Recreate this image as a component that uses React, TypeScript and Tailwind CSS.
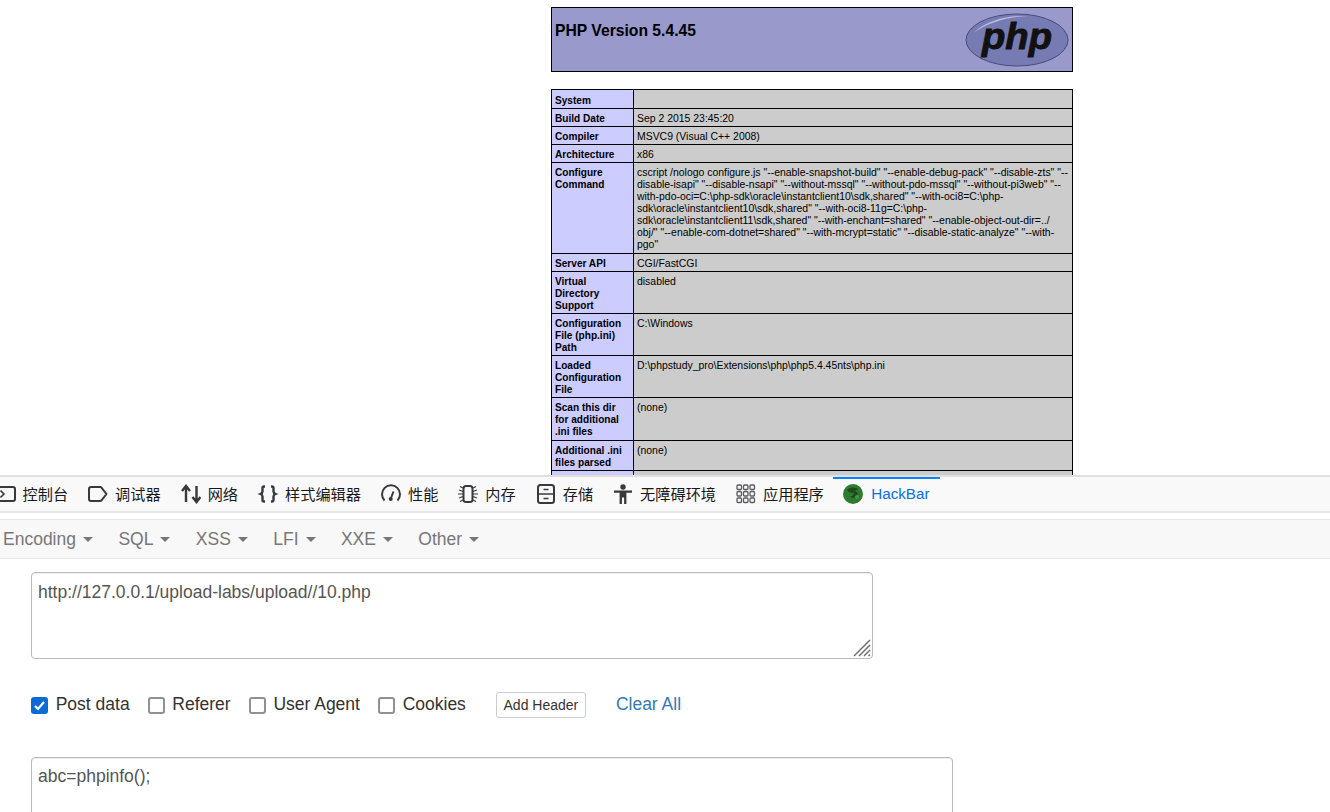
const sans = "font-['Liberation_Sans',Arial,sans-serif]";

const CONFIGURE = [
  'cscript /nologo configure.js "--enable-snapshot-build" "--enable-debug-pack" "--disable-zts" "--',
  'disable-isapi" "--disable-nsapi" "--without-mssql" "--without-pdo-mssql" "--without-pi3web" "--',
  'with-pdo-oci=C:\\php-sdk\\oracle\\instantclient10\\sdk,shared" "--with-oci8=C:\\php-',
  'sdk\\oracle\\instantclient10\\sdk,shared" "--with-oci8-11g=C:\\php-',
  'sdk\\oracle\\instantclient11\\sdk,shared" "--with-enchant=shared" "--enable-object-out-dir=../',
  'obj/" "--enable-com-dotnet=shared" "--with-mcrypt=static" "--disable-static-analyze" "--with-',
  'pgo"',
];

const ROWS: { label: string[]; value: string[]; height: string }[] = [
  { label: ['System'], value: [''], height: 'h-[19px]' },
  { label: ['Build Date'], value: ['Sep 2 2015 23:45:20'], height: 'h-[18px]' },
  { label: ['Compiler'], value: ['MSVC9 (Visual C++ 2008)'], height: 'h-[18px]' },
  { label: ['Architecture'], value: ['x86'], height: 'h-[18px]' },
  { label: ['Configure', 'Command'], value: CONFIGURE, height: 'h-[91px]' },
  { label: ['Server API'], value: ['CGI/FastCGI'], height: 'h-[18px]' },
  { label: ['Virtual', 'Directory', 'Support'], value: ['disabled'], height: 'h-[42px]' },
  { label: ['Configuration', 'File (php.ini)', 'Path'], value: ['C:\\Windows'], height: 'h-[42px]' },
  { label: ['Loaded', 'Configuration', 'File'], value: ['D:\\phpstudy_pro\\Extensions\\php\\php5.4.45nts\\php.ini'], height: 'h-[42px]' },
  { label: ['Scan this dir', 'for additional', '.ini files'], value: ['(none)'], height: 'h-[43px]' },
  { label: ['Additional .ini', 'files parsed'], value: ['(none)'], height: 'h-[30px]' },
  { label: [''], value: [''], height: 'h-[18px]' },
];

function PhpLogo() {
  return (
    <svg width="104" height="54" viewBox="0 0 104 54" className="shrink-0">
      <ellipse cx="52" cy="27" rx="51" ry="26" fill="#777bb3" stroke="#4a4c78" strokeWidth="1" />
      <path d="M8 20 C22 7 44 2 62 3 C44 4 24 9 8 20Z" fill="#b9bbd8" />
      <text x="52" y="36" textAnchor="middle" fontFamily="Liberation Sans, Arial, sans-serif" fontWeight="700" fontStyle="italic" fontSize="36" textLength="70" lengthAdjust="spacingAndGlyphs" fill="#111" stroke="#111" strokeWidth="0.9">php</text>
    </svg>
  );
}

function ConsoleIcon() {
  return (
    <svg width="20" height="20" viewBox="0 0 20 20" fill="none" stroke="#38383d" strokeWidth="2">
      <rect x="1" y="3" width="18" height="14" rx="2" />
      <path d="M4.5 6.5 8 10l-3.5 3.5" strokeWidth="1.6" />
    </svg>
  );
}

function DebuggerIcon() {
  return (
    <svg width="20" height="20" viewBox="0 0 20 20" fill="none" stroke="#38383d" strokeWidth="2" strokeLinejoin="round">
      <path d="M3 3h9.5a1 1 0 0 1 .8.4L18.5 10l-5.2 6.6a1 1 0 0 1-.8.4H3a2 2 0 0 1-2-2V5a2 2 0 0 1 2-2Z" />
    </svg>
  );
}

function NetworkIcon() {
  return (
    <svg width="20" height="20" viewBox="0 0 20 20" fill="none" stroke="#38383d" strokeWidth="2.4">
      <path d="M5 18V4M1 7l4-5 4 5" />
      <path d="M15.5 2v14M11.5 13l4 5 4-5" />
    </svg>
  );
}

function BracesIcon() {
  return (
    <svg width="20" height="20" viewBox="0 0 20 20" fill="none" stroke="#38383d" strokeWidth="2.4">
      <path d="M7 2.500H6a1.500 1.500 0 0 0-1.500 1.500v3.500c0 1.200-.8 2-2 2.500 1.200.5 2 1.300 2 2.500V16A1.500 1.500 0 0 0 6 17.500h1" />
      <path d="M13 2.500h1A1.500 1.500 0 0 1 15.500 4v3.500c0 1.200.8 2 2 2.500-1.200.5-2 1.300-2 2.500V16a1.500 1.500 0 0 1-1.500 1.500h-1" />
    </svg>
  );
}

function GaugeIcon() {
  return (
    <svg width="20" height="20" viewBox="0 0 20 20" fill="none" stroke="#38383d" strokeWidth="2">
      <path d="M3.500 16.500A9 9 0 1 1 16.500 16.500" />
      <path d="M12.500 7.500 10 14" />
      <circle cx="9.700" cy="15" r="2" fill="#38383d" stroke="none" />
    </svg>
  );
}

function MemoryIcon() {
  return (
    <svg width="20" height="20" viewBox="0 0 20 20" fill="none" stroke="#38383d">
      <rect x="5.500" y="2" width="9" height="16" rx="2.500" strokeWidth="2" />
      <path d="M5 4 2 2.500M5 7.500 1 6M5 10H0M5 12.500 1 14M5 16 2 17.500M15 4l3-1.500M15 7.500 19 6M15 10h5M15 12.500l4 1.500M15 16l3 1.500" strokeWidth="1.200" />
    </svg>
  );
}

function StorageIcon() {
  return (
    <svg width="20" height="20" viewBox="0 0 20 20" fill="none" stroke="#38383d" strokeWidth="2">
      <rect x="2" y="1" width="16" height="18" rx="2.500" />
      <path d="M2 10h16" strokeWidth="1.500" />
      <path d="M7.500 5.500h5M7.500 14.500h5" strokeWidth="1.500" />
    </svg>
  );
}

function AccessibilityIcon() {
  return (
    <svg width="20" height="20" viewBox="0 0 20 20" fill="#38383d">
      <circle cx="10" cy="3" r="2.700" />
      <path d="M1 6.500h18v2.300h-5.600V20h-2.300v-6.500H8.900V20H6.600V8.800H1Z" />
    </svg>
  );
}

function AppsIcon() {
  const cells = [1, 7.500, 14];
  return (
    <svg width="20" height="20" viewBox="0 0 20 20" fill="none" stroke="#5a5a5f" strokeWidth="1.300">
      {cells.map(y => cells.map(x => <rect key={`${x}-${y}`} x={x} y={y} width="4.500" height="4.500" rx="1" />))}
    </svg>
  );
}

function HackBarIcon() {
  return (
    <svg width="20" height="20" viewBox="0 0 20 20">
      <circle cx="10" cy="10" r="10" fill="#2f7a30" />
      <path d="M4 6c3-3 8-3 11-1l-3 2 3 2c-1 4-5 6-8 4 2-1 4-2 4-4-2 0-5 0-7-3Z" fill="#1d4a1e" />
      <circle cx="14" cy="13" r="2" fill="#3f9a3f" />
    </svg>
  );
}

const TABS = [
  { label: '控制台', icon: <ConsoleIcon /> },
  { label: '调试器', icon: <DebuggerIcon /> },
  { label: '网络', icon: <NetworkIcon /> },
  { label: '样式编辑器', icon: <BracesIcon /> },
  { label: '性能', icon: <GaugeIcon /> },
  { label: '内存', icon: <MemoryIcon /> },
  { label: '存储', icon: <StorageIcon /> },
  { label: '无障碍环境', icon: <AccessibilityIcon /> },
  { label: '应用程序', icon: <AppsIcon /> },
];

const MENUS = ['Encoding', 'SQL', 'XSS', 'LFI', 'XXE', 'Other'];

function Check({ label, checked }: { label: string; checked?: boolean }) {
  return (
    <label className="flex items-center">
      {checked ? (
        <span className="w-[17px] h-[17px] rounded-[3px] bg-[#0b6cd8] flex items-center justify-center">
          <svg width="13" height="13" viewBox="0 0 13 13" fill="none" stroke="#fff" strokeWidth="2.200">
            <path d="M2 7l3 3 6-7" />
          </svg>
        </span>
      ) : (
        <span className="w-[17px] h-[17px] rounded-[3px] border-2 border-[#8f8f9d] bg-white" />
      )}
      <span className="ml-[7.7px] text-[17.5px] leading-[20px] pb-[2px] text-[#333]">{label}</span>
    </label>
  );
}

export default function App() {
  return (
    <div className={`w-[1330px] h-[812px] overflow-hidden bg-white flex flex-col ${sans}`}>
      <div className="h-[475px] shrink-0 overflow-hidden pl-[551px] pt-[7px]">
        <div className="w-[522px] h-[65px] border border-black bg-[#9999cc] flex justify-between pl-[3px] pr-[3px]">
          <h1 className="text-[15.7px] leading-[18px] font-bold text-black mt-[14px]">PHP Version 5.4.45</h1>
          <div className="mt-[5px]"><PhpLogo /></div>
        </div>
        <table className="w-[522px] mt-[17px] border-collapse table-fixed text-[10.45px] leading-[12px] text-black">
          <colgroup>
            <col className="w-[82px]" />
            <col />
          </colgroup>
          <tbody>
            {ROWS.map((row, i) => (
              <tr key={i} className={`${row.height} [&:first-child>td]:pt-[5px]`}>
                <td className="border border-black bg-[#ccccff] pl-[3px] pr-0 pt-[4px] pb-[1px] align-top font-bold text-[10.1px]">
                  {row.label.map((line, j) => <span key={j} className="block whitespace-nowrap">{line}</span>)}
                </td>
                <td className="border border-black bg-[#cccccc] pl-[3px] pr-0 pt-[4px] pb-[1px] align-top">
                  {row.value.map((line, j) => <span key={j} className="block whitespace-nowrap">{line}</span>)}
                </td>
              </tr>
            ))}
          </tbody>
        </table>
      </div>

      <div className="h-[38px] shrink-0 border-t-2 border-b-2 border-t-[#e0e0e2] border-b-[#e6e6e6] bg-[#f9f9fa] flex -ml-[14.5px] w-[1345px] font-['Noto_Sans_CJK_SC','Liberation_Sans',sans-serif] text-[15.2px] text-[#18181a]">
        {TABS.map(tab => (
          <div key={tab.label} className="flex items-center px-[10px] gap-[7px]">
            {tab.icon}
            <span className="pb-[2px]">{tab.label}</span>
          </div>
        ))}
        <div className="flex items-center px-[10px] gap-[8px] border-t-[2px] border-[#0a84ff] text-[#0a6fe0] -ml-[0.5px] pb-[2px]">
          <HackBarIcon />
          <span className={sans}>HackBar</span>
        </div>
      </div>

      <div className="h-[6px] shrink-0" />

      <div className="h-[40px] shrink-0 bg-[#f8f8f8] border-t border-b border-[#e7e7e7] flex items-center pl-[3px] text-[17.5px] text-[#777]">
        {MENUS.map(menu => (
          <div key={menu} className="flex items-center gap-[7px] mr-[25.4px]">
            <span>{menu}</span>
            <span className="w-0 h-0 border-x-[5px] border-x-transparent border-t-[5px] border-t-[#777]" />
          </div>
        ))}
      </div>

      <div className="pl-[31px] pt-[13px] flex flex-col">
        <div className="relative w-[842px] h-[87px]">
          <textarea
            readOnly
            defaultValue="http://127.0.0.1/upload-labs/upload//10.php"
            className="w-full h-full resize-none border border-[#bbb] rounded-[4px] px-[6px] py-[6px] text-[17.5px] leading-[26px] text-[#555] shadow-[inset_0_1px_1px_rgba(0,0,0,0.075)] outline-none"
          />
          <svg width="20" height="20" viewBox="0 0 20 20" className="absolute right-[1px] bottom-[1px]" stroke="#707070" strokeWidth="1.500">
            <path d="M2 18 18 2M7 18 18 7M12 18l6-6M16.500 18l1.500-1.500" />
          </svg>
        </div>

        <div className="mt-[33px] h-[26px] flex items-center">
          <Check label="Post data" checked />
          <div className="w-[18px]" />
          <Check label="Referer" />
          <div className="w-[18px]" />
          <Check label="User Agent" />
          <div className="w-[18px]" />
          <Check label="Cookies" />
          <button className="ml-[30px] w-[90px] h-[26px] border border-[#ccc] rounded-[3px] bg-white text-[14px] text-[#333]">Add Header</button>
          <a className="ml-[30px] text-[17.5px] pb-[2px] text-[#337ab7]">Clear All</a>
        </div>

        <textarea
          readOnly
          defaultValue="abc=phpinfo();"
          className="mt-[39px] w-[922px] h-[90px] shrink-0 resize-none border border-[#bbb] rounded-[4px] px-[6px] pt-[5px] pb-[6px] text-[17.5px] leading-[26px] text-[#555] shadow-[inset_0_1px_1px_rgba(0,0,0,0.075)] outline-none"
        />
      </div>
    </div>
  );
}
